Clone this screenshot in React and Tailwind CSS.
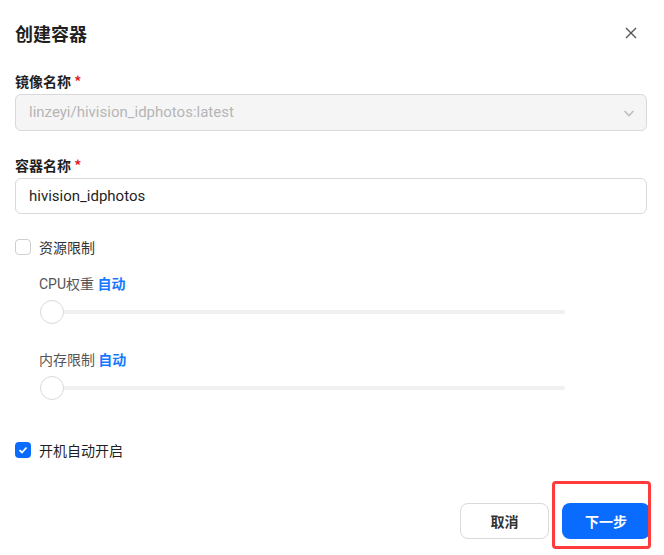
import React, { useState } from "react";

const font = { fontFamily: '"Noto Sans CJK SC", sans-serif' };

function Slider() {
  return (
    <div className="relative mt-[7px] ml-[25px] h-[24px] w-[525px] flex items-center">
      <div className="ml-[12px] h-[4px] w-full rounded-full bg-[#f0f0f0]" />
      <div className="absolute left-0 top-0 h-[24px] w-[24px] rounded-full border border-[#d9d9d9] bg-white" />
    </div>
  );
}

export default function App() {
  const [limit, setLimit] = useState(false);
  const [autoStart, setAutoStart] = useState(true);

  return (
    <div className="w-[664px] h-[555px] bg-white pl-[15px] pr-[17px] text-[#1f1f1f] font-['Roboto','Noto_Sans_CJK_SC',sans-serif]">
      <div className="flex h-[66px] items-center justify-between">
        <div className="text-[18px] font-bold font-['Noto_Sans_CJK_SC',sans-serif]">创建容器</div>
        <svg width="12" height="12" viewBox="0 0 12 12" className="mr-[10px]">
          <path d="M1 1L11 11M11 1L1 11" stroke="#555" strokeWidth="1.4" />
        </svg>
      </div>

      <div className="mt-[5px] h-[20px] text-[14px] font-semibold leading-[20px]" style={font}>
        镜像名称 <span className="text-[#e5212d]">*</span>
      </div>
      <div className="mt-[3px] flex h-[37px] items-center justify-between rounded-[6px] border border-[#d9d9d9] bg-[#f5f5f5] pl-[13px] pr-[10px]">
        <span className="text-[15px] text-[#b5b5b5]">linzeyi/hivision_idphotos:latest</span>
        <svg width="14" height="14" viewBox="0 0 14 14">
          <path d="M2.5 5L7 9.5L11.5 5" stroke="#bdbdbd" strokeWidth="1.6" fill="none" />
        </svg>
      </div>

      <div className="mt-[24px] h-[20px] text-[14px] font-semibold leading-[20px]" style={font}>
        容器名称 <span className="text-[#e5212d]">*</span>
      </div>
      <div className="mt-[3px] flex h-[36px] items-center rounded-[6px] border border-[#d9d9d9] bg-white pl-[13px]">
        <span className="text-[15px] text-[#1f1f1f]">hivision_idphotos</span>
      </div>

      <label className="mt-[23px] flex h-[20px] items-center gap-[8px] cursor-pointer" onClick={() => setLimit(!limit)}>
        <span className="h-[16px] w-[16px] rounded-[4px] border border-[#cfcfcf] bg-white" />
        <span className="text-[14px] text-[#333]" style={font}>资源限制</span>
      </label>

      <div className="mt-[16px] ml-[24px] h-[20px] text-[14px] leading-[20px] text-[#555]">
        CPU<span style={font}>权重</span>{" "}
        <span className="font-bold text-[#1677ff]" style={font}>自动</span>
      </div>
      <Slider />

      <div className="mt-[25px] ml-[24px] h-[20px] text-[14px] leading-[20px] text-[#555]" style={font}>
        内存限制 <span className="font-bold text-[#1677ff]">自动</span>
      </div>
      <Slider />

      <label className="mt-[40px] flex h-[20px] items-center gap-[8px] cursor-pointer" onClick={() => setAutoStart(!autoStart)}>
        <span className="flex h-[16px] w-[16px] items-center justify-center rounded-[4px] bg-[#0a6cff]">
          <svg width="10" height="10" viewBox="0 0 10 10">
            <path d="M1.5 5.2L4 7.5L8.5 2.5" stroke="#fff" strokeWidth="1.8" fill="none" />
          </svg>
        </span>
        <span className="text-[14px] text-[#1f1f1f]" style={font}>开机自动开启</span>
      </label>

      <div className="mt-[43px] flex justify-end gap-[13px]">
        <button className="h-[36px] w-[89px] rounded-[8px] border border-[#d9d9d9] bg-white text-[14px] font-semibold text-[#333]" style={font}>
          取消
        </button>
        <div className="relative mr-[-3px]">
          <button className="h-[36px] w-[88px] rounded-[8px] bg-[#0a6cff] text-[14px] font-semibold text-white" style={font}>
            下一步
          </button>
          <div className="pointer-events-none absolute left-[-10px] top-[-22px] h-[68px] w-[99px] rounded-[4px] border-[3px] border-[#ff3b3b]" />
        </div>
      </div>
    </div>
  );
}
